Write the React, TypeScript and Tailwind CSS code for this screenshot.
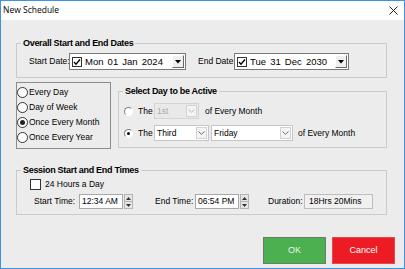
import React from "react";

function Legend({ children }: { children: React.ReactNode }) {
  return (
    <legend className="ml-[4px] px-[2px] text-[9px] font-bold leading-[13px] tracking-[-0.3px] text-black">
      {children}
    </legend>
  );
}

function DatePicker({ text, width }: { text: string; width: string }) {
  return (
    <div className={`flex h-[17px] items-center border border-[#7a7a7a] bg-white ${width}`}>
      <span className="ml-[2px] flex h-[10px] w-[10px] items-center justify-center border border-[#333]">
        <svg width="8" height="8" viewBox="0 0 8 8">
          <polyline points="1,4 3,6.2 7,1.5" fill="none" stroke="#000" strokeWidth="1.4" />
        </svg>
      </span>
      <span className="ml-[3px] flex-1 whitespace-nowrap text-[9.5px] leading-none text-black [word-spacing:1.5px]">
        {text}
      </span>
      <span className="mr-[1px] flex h-[13px] w-[12px] items-center justify-center border border-t-white border-l-white border-b-[#696969] border-r-[#696969] bg-[#f0f0f0]">
        <svg width="6" height="4" viewBox="0 0 6 4">
          <polygon points="0,0 6,0 3,3.5" fill="#000" />
        </svg>
      </span>
    </div>
  );
}

function Radio({ label, checked }: { label: string; checked?: boolean }) {
  return (
    <div className="flex h-[15px] items-center">
      <span className="flex h-[11px] w-[11px] items-center justify-center rounded-full border border-[#333] bg-white">
        {checked && <span className="h-[5px] w-[5px] rounded-full bg-[#222]" />}
      </span>
      <span className="ml-[1px] whitespace-nowrap">{label}</span>
    </div>
  );
}

function ClassicRadio({ checked }: { checked?: boolean }) {
  return (
    <span className="flex h-[9px] w-[9px] items-center justify-center rounded-full border border-t-[#808080] border-l-[#808080] border-b-white border-r-white bg-white">
      {checked && <span className="h-[3px] w-[3px] rounded-full bg-black" />}
    </span>
  );
}

function Combo({ text, width, disabled }: { text: string; width: string; disabled?: boolean }) {
  return (
    <div
      className={`flex h-[16px] items-stretch border ${
        disabled ? "border-[#d4d4d4] bg-[#e9e9e9]" : "border-[#c6c6c6] bg-white"
      } ${width}`}
    >
      <span className={`flex flex-1 items-center pl-[2px] ${disabled ? "text-[#a9a9a9]" : "text-black"}`}>{text}</span>
      <span className="m-[1px] flex w-[11px] items-center justify-center border border-[#d2d2d2] bg-[#f4f4f4]">
        <svg width="7" height="4" viewBox="0 0 7 4">
          <polyline points="0.5,0.5 3.5,3.3 6.5,0.5" fill="none" stroke={disabled ? "#b8b8b8" : "#707070"} strokeWidth="1" />
        </svg>
      </span>
    </div>
  );
}

function TimeBox({ text }: { text: string }) {
  return (
    <div className="flex h-[15px] w-[54px] items-center">
      <span className="flex h-full flex-1 items-center border border-[#a8a8a8] bg-white pl-[2px]">{text}</span>
      <span className="ml-[1px] flex h-full w-[9px] flex-col border border-[#b4b4b4] bg-[#e6e6e6]">
        <span className="flex flex-1 items-center justify-center border-b border-[#b4b4b4]">
          <svg width="5" height="3" viewBox="0 0 5 3">
            <polygon points="0,3 5,3 2.5,0" fill="#333" />
          </svg>
        </span>
        <span className="flex flex-1 items-center justify-center">
          <svg width="5" height="3" viewBox="0 0 5 3">
            <polygon points="0,0 5,0 2.5,3" fill="#333" />
          </svg>
        </span>
      </span>
    </div>
  );
}

export default function App() {
  return (
    <div className="flex h-[269px] w-[405px] flex-col border border-[#3b94df] bg-[#ececec] font-['Liberation_Sans',Arial,sans-serif] text-[8.5px] leading-none text-black">
      {/* title bar */}
      <div className="flex h-[19px] items-center justify-between bg-white pl-[2px] pr-[6px]">
        <span className="font-['Open_Sans',sans-serif] text-[8.5px] text-black">New Schedule</span>
        <svg width="9" height="9" viewBox="0 0 9 9">
          <line x1="0.5" y1="0.5" x2="8.5" y2="8.5" stroke="#222" strokeWidth="1" />
          <line x1="8.5" y1="0.5" x2="0.5" y2="8.5" stroke="#222" strokeWidth="1" />
        </svg>
      </div>

      <div className="flex flex-1 flex-col pl-[15px]">
        {/* overall dates */}
        <fieldset className="mt-[17px] w-[371px] border border-[#cbcbcb] pb-[7px]">
          <Legend>Overall Start and End Dates</Legend>
          <div className="mt-[3px] flex items-center">
            <span className="ml-[12px] w-[40px] whitespace-nowrap">Start Date:</span>
            <DatePicker text="Mon 01 Jan 2024" width="w-[117px]" />
            <span className="ml-[12px] w-[36px] whitespace-nowrap">End Date:</span>
            <DatePicker text="Tue 31 Dec 2030" width="w-[115px]" />
          </div>
        </fieldset>

        <div className="mt-[4px] flex items-start">
          {/* frequency */}
          <div className="flex h-[67px] w-[95px] flex-col border border-[#8c8c8c] pt-[2px]">
            <Radio label="Every Day" />
            <Radio label="Day of Week" />
            <Radio label="Once Every Month" checked />
            <Radio label="Once Every Year" />
          </div>

          {/* select day */}
          <fieldset className="ml-[7px] mt-[3px] w-[269px] border border-[#cbcbcb] pb-[6px]">
            <Legend>Select Day to be Active</Legend>
            <div className="mt-[5px] flex h-[16px] items-center pl-[5px]">
              <ClassicRadio />
              <span className="ml-[5px] w-[16px]">The</span>
              <Combo text="1st" width="w-[45px]" disabled />
              <span className="ml-[6px] whitespace-nowrap">of Every Month</span>
            </div>
            <div className="mt-[6px] flex h-[16px] items-center pl-[5px]">
              <ClassicRadio checked />
              <span className="ml-[5px] w-[16px]">The</span>
              <Combo text="Third" width="w-[55px]" />
              <div className="ml-[2px]">
                <Combo text="Friday" width="w-[82px]" />
              </div>
              <span className="ml-[5px] whitespace-nowrap">of Every Month</span>
            </div>
          </fieldset>
        </div>

        {/* session times */}
        <fieldset className="mt-[15px] w-[371px] border border-[#cbcbcb] pb-[5px]">
          <Legend>Session Start and End Times</Legend>
          <div className="mt-[2px] flex h-[11px] items-center pl-[13px]">
            <span className="h-[11px] w-[11px] border border-[#333] bg-white" />
            <span className="ml-[4px] whitespace-nowrap">24 Hours a Day</span>
          </div>
          <div className="mt-[4px] flex h-[15px] items-center pl-[17px]">
            <span className="w-[45px] whitespace-nowrap">Start Time:</span>
            <TimeBox text="12:34 AM" />
            <span className="ml-[22px] w-[40px] whitespace-nowrap">End Time:</span>
            <TimeBox text="06:54 PM" />
            <span className="ml-[19px] w-[36px] whitespace-nowrap">Duration:</span>
            <span className="flex h-[15px] w-[69px] items-center border border-[#bdbdbd] bg-[#f0f0f0] pl-[4px]">
              18Hrs 20Mins
            </span>
          </div>
        </fieldset>

        {/* buttons */}
        <div className="mt-[22px] flex justify-end gap-[6px] pr-[9px]">
          <button className="h-[27px] w-[63px] border border-[#6f7a6f] bg-[#4caf50] text-[9px] text-[#eaf6ea]">OK</button>
          <button className="h-[27px] w-[63px] border border-[#e8474d] bg-[#ed1c24] text-[9px] text-white">Cancel</button>
        </div>
      </div>
    </div>
  );
}
